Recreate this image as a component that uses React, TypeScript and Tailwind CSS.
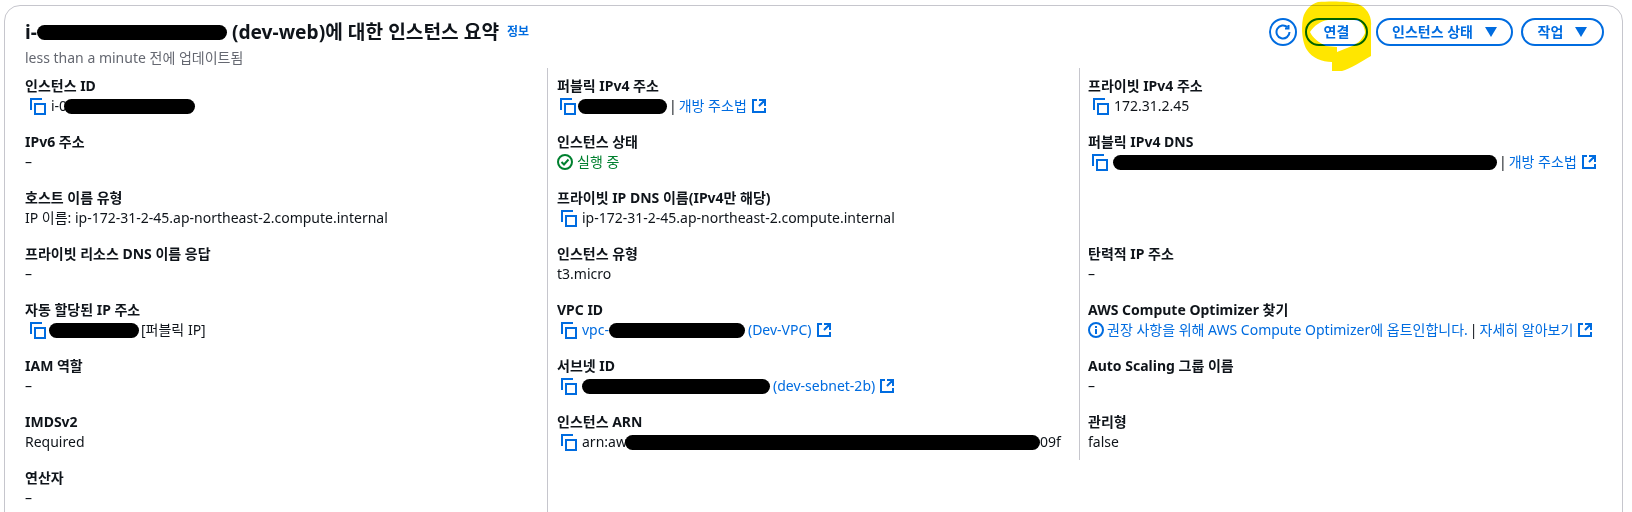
import React from 'react';

const Copy = () => (
  <svg viewBox="0 0 18 18" className="w-[18px] h-[18px] shrink-0 text-[#006ce0]" fill="none" stroke="currentColor" strokeWidth="2">
    <path d="M6 7h10v10H6z" />
    <path d="M2 13V2h11" />
  </svg>
);

const External = () => (
  <svg viewBox="0 0 16 16" className="w-4 h-4 shrink-0 ml-1 text-[#006ce0]" fill="none" stroke="currentColor" strokeWidth="2">
    <path d="M14 8.01v-6H8M14.02 2 8 8.02M6 2.01H2v12h12V10" />
  </svg>
);

const Caret = () => (
  <svg viewBox="0 0 12 10" className="w-3 h-[10px] text-[#006ce0]" fill="currentColor">
    <path d="M0 0h12L6 10z" />
  </svg>
);

const Blob = ({ w, ml = 0 }: { w: string; ml?: number }) => (
  <span className={`inline-block h-[15px] rounded-full bg-black shrink-0 ${w}`} style={{ marginLeft: ml }} />
);

const Field = ({ label, children }: { label: string; children: React.ReactNode }) => (
  <div className="mb-4 h-10">
    <div className="font-bold leading-5 text-[#0f141a]">{label}</div>
    <div className="flex items-center h-5 whitespace-nowrap text-[#0f141a]">{children}</div>
  </div>
);

const Link = ({ children }: { children: React.ReactNode }) => <span className="text-[#006ce0]">{children}</span>;

const Pipe = () => <span className="mx-[2px]">|</span>;

const Pill = ({ children, className }: { children: React.ReactNode; className: string }) => (
  <div className={`h-7 flex items-center justify-center gap-3 rounded-full border-2 border-[#006ce0] bg-white font-bold text-sm text-[#006ce0] ${className}`}>
    {children}
  </div>
);

export default function App() {
  return (
    <div
      className="relative h-[512px] overflow-hidden bg-white pt-[5px] pl-1 pr-[9px] text-sm"
      style={{ fontFamily: '"Noto Sans", "Noto Sans CJK KR", sans-serif' }}
    >
      <div className="h-[520px] rounded-t-2xl border border-[#c6c6cd]">
        <div className="flex justify-between pl-5 pr-[18px] pt-3">
          <div>
            <div className="flex items-center h-7 font-bold text-[19.2px] text-[#0f141a] whitespace-nowrap">
              <span>i-</span>
              <Blob w="w-[190px]" ml={0} />
              <span className="ml-[5px]">(dev-web)에 대한 인스턴스 요약</span>
              <span className="ml-2 text-xs text-[#006ce0]">정보</span>
            </div>
            <div className="mt-[2px] leading-5 text-[#656871]">less than a minute 전에 업데이트됨</div>
          </div>
          <div className="flex gap-2">
            <div className="w-7 h-7 flex items-center justify-center rounded-full border-2 border-[#006ce0] bg-white">
              <svg viewBox="0 0 16 16" className="w-4 h-4 text-[#006ce0]" fill="none" stroke="currentColor" strokeWidth="2">
                <path d="M14.5 8a6.5 6.5 0 1 1-2-4.7" />
                <path d="M13.5 1v3.5H10" />
              </svg>
            </div>
            <Pill className="w-[63px]">연결</Pill>
            <Pill className="w-[137px]">
              인스턴스 상태
              <Caret />
            </Pill>
            <Pill className="w-[83px]">
              작업
              <Caret />
            </Pill>
          </div>
        </div>

        <div className="grid grid-cols-[542px_532px_1fr]">
          <div className="pl-5 pt-2">
            <Field label="인스턴스 ID">
              <span className="ml-1 mr-1"><Copy /></span>
              <span>i-0</span>
              <Blob w="w-[131px]" ml={-3} />
            </Field>
            <Field label="IPv6 주소">–</Field>
            <Field label="호스트 이름 유형">IP 이름: ip-172-31-2-45.ap-northeast-2.compute.internal</Field>
            <Field label="프라이빗 리소스 DNS 이름 응답">–</Field>
            <Field label="자동 할당된 IP 주소">
              <span className="ml-1 mr-[2px]"><Copy /></span>
              <Blob w="w-[90px]" />
              <span className="ml-[2px]">[퍼블릭 IP]</span>
            </Field>
            <Field label="IAM 역할">–</Field>
            <Field label="IMDSv2">Required</Field>
            <Field label="연산자">–</Field>
          </div>

          <div className="border-l border-[#c6c6cd] pl-[9px] pt-2">
            <Field label="퍼블릭 IPv4 주소">
              <span className="ml-[2px] mr-[1px]"><Copy /></span>
              <Blob w="w-[89px]" />
              <Pipe />
              <Link>개방 주소법</Link>
              <External />
            </Field>
            <Field label="인스턴스 상태">
              <svg viewBox="0 0 16 16" className="w-4 h-4 mr-1 text-[#00802f]" fill="none" stroke="currentColor" strokeWidth="2">
                <circle cx="8" cy="8" r="7" />
                <path d="M4.5 8l2.5 2.5L11.5 5.5" />
              </svg>
              <span className="text-[#00802f]">실행 중</span>
            </Field>
            <Field label="프라이빗 IP DNS 이름(IPv4만 해당)">
              <span className="ml-[3px] mr-1"><Copy /></span>
              ip-172-31-2-45.ap-northeast-2.compute.internal
            </Field>
            <Field label="인스턴스 유형">t3.micro</Field>
            <Field label="VPC ID">
              <span className="ml-[3px] mr-1"><Copy /></span>
              <Link>vpc-</Link>
              <Blob w="w-[136px]" />
              <span className="ml-[3px]"><Link>(Dev-VPC)</Link></span>
              <External />
            </Field>
            <Field label="서브넷 ID">
              <span className="ml-[3px] mr-1"><Copy /></span>
              <Blob w="w-[188px]" />
              <span className="ml-[3px]"><Link>(dev-sebnet-2b)</Link></span>
              <External />
            </Field>
            <Field label="인스턴스 ARN">
              <span className="ml-[3px] mr-1"><Copy /></span>
              <span>arn:aw</span>
              <Blob w="w-[415px]" ml={-2} />
              <span>09f</span>
            </Field>
          </div>

          <div className="self-start h-[392px] border-l border-[#c6c6cd] pl-2 pt-2">
            <Field label="프라이빗 IPv4 주소">
              <span className="ml-1 mr-1"><Copy /></span>
              172.31.2.45
            </Field>
            <Field label="퍼블릭 IPv4 DNS">
              <span className="ml-[3px] mr-1"><Copy /></span>
              <Blob w="w-[384px]" />
              <Pipe />
              <Link>개방 주소법</Link>
              <External />
            </Field>
            <div className="h-10 mb-4" />
            <Field label="탄력적 IP 주소">–</Field>
            <Field label="AWS Compute Optimizer 찾기">
              <svg viewBox="0 0 16 16" className="w-4 h-4 mr-[3px] text-[#006ce0]" fill="none" stroke="currentColor" strokeWidth="2">
                <circle cx="8" cy="8" r="7" />
                <path d="M8 7v5M8 4v2" />
              </svg>
              <Link>권장 사항을 위해 AWS Compute Optimizer에 옵트인합니다.</Link>
              <Pipe />
              <Link>자세히 알아보기</Link>
              <External />
            </Field>
            <Field label="Auto Scaling 그룹 이름">–</Field>
            <Field label="관리형">false</Field>
          </div>
        </div>
      </div>

      {/* yellow marker drawn over the connect button */}
      <svg viewBox="1300 0 75 75" className="absolute left-[1300px] top-0 w-[75px] h-[75px] mix-blend-multiply">
        <path
          fillRule="evenodd"
          fill="#ffe600"
          d="M1318 2C1330 1 1348 1 1358 4C1367 8 1372 16 1371 26L1371 56C1362 61 1350 69 1342 71L1332 71L1332 62C1322 62 1312 58 1307 50C1302 42 1301 28 1303 18C1305 10 1311 4 1318 2Z M1310 32C1314 26 1320 21 1328 20L1358 20C1362 22 1365 28 1365 33C1363 38 1358 44 1352 46L1337 52L1337 47L1326 46C1318 42 1313 38 1310 32Z"
        />
      </svg>
    </div>
  );
}
